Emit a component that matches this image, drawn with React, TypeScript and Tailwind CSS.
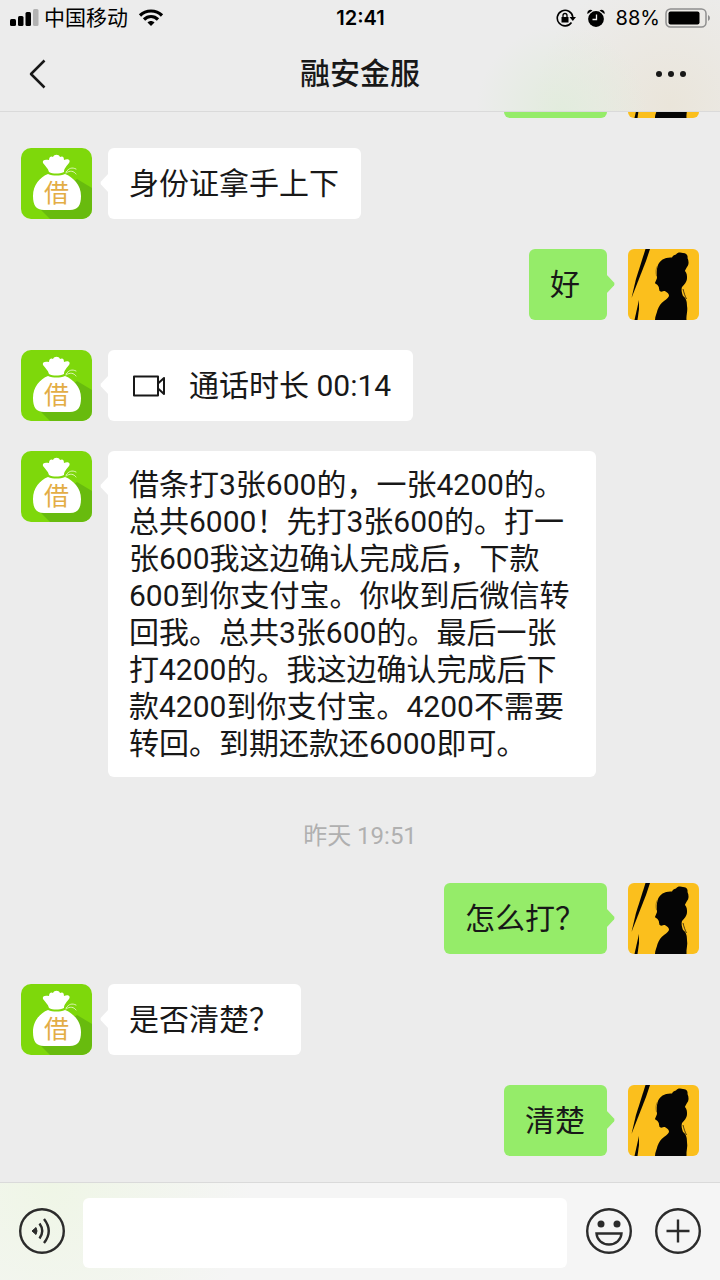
import { useState } from "react";

type Message =
  | { kind: "text"; from: "me" | "them"; text: string }
  | { kind: "call"; from: "me" | "them"; text: string }
  | { kind: "time"; text: string };

const messages: Message[] = [
  { kind: "text", from: "me", text: "" },
  { kind: "text", from: "them", text: "身份证拿手上下" },
  { kind: "text", from: "me", text: "好" },
  { kind: "call", from: "them", text: "通话时长 00:14" },
  {
    kind: "text",
    from: "them",
    text: "借条打3张600的，一张4200的。总共6000！先打3张600的。打一张600我这边确认完成后，下款600到你支付宝。你收到后微信转回我。总共3张600的。最后一张打4200的。我这边确认完成后下款4200到你支付宝。4200不需要转回。到期还款还6000即可。",
  },
  { kind: "time", text: "昨天 19:51" },
  { kind: "text", from: "me", text: "怎么打？" },
  { kind: "text", from: "them", text: "是否清楚？" },
  { kind: "text", from: "me", text: "清楚" },
];

function BagAvatar() {
  return (
    <svg
      viewBox="0 0 71 71"
      className="h-[71px] w-[71px] shrink-0 rounded-[10px]"
      role="img"
      aria-label="融安金服"
    >
      <rect width="71" height="71" fill="#7ed80b" />
      <path d="M56 31 L71 40 V71 H29 L18 60 Z" fill="#68bb0e" />
      <path
        d="M28 24 C27 20 24 18 22 15 C21 12 24 11 28 12 C28 8 31 8 32 9 C33 6 38 6 39 9 C41 8 43 8 43 12 C47 10 50 12 48 15 C46 18 43 20 43 24 C38 26 32 26 28 24 Z"
        fill="#fff"
      />
      <path
        d="M27 26 C32 28 39 28 44 26 C52 29 60 37 60 48 C60 57 57 62 49 62 H23 C15 62 12 57 12 48 C12 37 19 29 27 26 Z"
        fill="#fff"
      />
      <path
        d="M45 24 C48 20 51 19 55 21 M45 25 C49 22 53 23 55 26"
        fill="none"
        stroke="#e6f7c6"
        strokeWidth="0.9"
        strokeLinecap="round"
      />
      <text
        x="35.500"
        y="54"
        textAnchor="middle"
        fontSize="25"
        fill="#e3ad45"
        className="font-['Noto_Sans_CJK_SC',sans-serif]"
      >
        借
      </text>
    </svg>
  );
}

function SilhouetteAvatar() {
  return (
    <svg
      viewBox="0 0 71 71"
      className="h-[71px] w-[71px] shrink-0 rounded-md"
      role="img"
      aria-label="我"
    >
      <rect width="71" height="71" fill="#fbbf1d" />
      <path d="M17.500 0 H22 L18 12 L3.500 49 L8 30 Z" fill="#050505" />
      <path d="M11 51 L11 60 L9.500 71 H6.500 Z" fill="#050505" />
      <path
        d="M30 16 C32 11 37 8 44 8.500 C45 6 47 6 48 5.500 C49 3 53 3 55 4 C59 4 60 7 59.500 9 C61 12 61 16 59 18 C58 20 57 21 57 22 C59 24 59 27 59 29 C59 33 56 36 54 38 C53 41 54 44 55 47 C58 49 59 52 59 57 C60 62 58 66 58.500 71 H27 C27 67 29 64 29.500 61 C31 57 33 54 36 52 C39 50 41 48 41 46.500 C41 44 38 43 37 42 C35 42 34 43 32.500 42.500 C31 42 31.500 41 31 39.500 C31 38 30.500 37.500 29.500 36 C29 35 27 35 27 34 C27.500 32 28.500 31 29 29 C28.500 25 28.500 20 30 16 Z"
        fill="#050505"
      />
      <path d="M55 40 C56 44 57 47 58.500 50" fill="none" stroke="#050505" strokeWidth="0.7" />
      <path d="M28.500 27 C27.500 23 28 19 29.500 17" fill="none" stroke="#6d5312" strokeWidth="0.6" />
    </svg>
  );
}

function Tail({ side }: { side: "left" | "right" }) {
  return (
    <svg
      viewBox="0 0 9 22"
      className={
        side === "left"
          ? "absolute top-[24px] -left-[8px] h-[22px] w-[9px] text-white"
          : "absolute top-[24px] -right-[8px] h-[22px] w-[9px] -scale-x-100 text-[#95ec69]"
      }
      aria-hidden="true"
    >
      <path d="M9 1 L1 9.500 Q0 11 1 12.500 L9 21 Z" fill="currentColor" />
    </svg>
  );
}

function VideoIcon() {
  return (
    <svg
      viewBox="0 0 34 22"
      className="mr-6 ml-[2px] h-[22px] w-[34px] shrink-0"
      fill="none"
      stroke="#181818"
      strokeWidth="2"
      strokeLinejoin="round"
      aria-hidden="true"
    >
      <rect x="3" y="1.500" width="24" height="19" />
      <path d="M27 8.500 L33 3 V19 L27 13.500" />
    </svg>
  );
}

function MessageRow({ message }: { message: Message }) {
  if (message.kind === "time") {
    return (
      <p className="pt-3 text-center text-[24px] leading-[34px] text-[#b0b0b0]">
        {message.text}
      </p>
    );
  }

  const mine = message.from === "me";
  return (
    <div
      className={
        mine
          ? "flex shrink-0 flex-row-reverse items-start gap-[21px]"
          : "flex shrink-0 items-start gap-4"
      }
    >
      {mine ? <SilhouetteAvatar /> : <BagAvatar />}
      <div
        className={`relative flex min-h-[71px] max-w-[488px] items-center rounded-md py-[15px] pr-[22px] pl-[21px] text-[30px] leading-[37px] text-[#181818] ${
          mine ? "bg-[#95ec69]" : "bg-white"
        } ${message.text === "" ? "min-w-[103px]" : "min-w-[78px]"}`}
      >
        <Tail side={mine ? "right" : "left"} />
        {message.kind === "call" && <VideoIcon />}
        <p>{message.text}</p>
      </div>
    </div>
  );
}

function StatusBar() {
  return (
    <div className="grid h-9 grid-cols-[1fr_auto_1fr] items-center pr-[9px] pl-[10px] font-[Inter,'Noto_Sans_CJK_SC',sans-serif] text-[20px] leading-6 text-black">
      <div className="flex items-center">
        <svg viewBox="0 0 29 18" className="h-[18px] w-[29px]" aria-hidden="true">
          <rect x="0" y="10" width="6" height="7" rx="1.500" />
          <rect x="8" y="7" width="5.500" height="10" rx="1.500" />
          <rect x="15.500" y="3" width="5.500" height="14" rx="1.500" />
          <rect x="23" y="0" width="5.500" height="17" rx="1.500" fill="#b2b2b2" />
        </svg>
        <span className="ml-[5px] text-[21px]">中国移动</span>
        <svg
          viewBox="0 0 26 18"
          className="ml-[10px] h-[18px] w-[26px]"
          fill="none"
          stroke="#000"
          strokeWidth="3.200"
          aria-hidden="true"
        >
          <path d="M2 6.500 C8 0.500 18 0.500 24 6.500" />
          <path d="M6 10.500 C10 6.500 16 6.500 20 10.500" />
          <path d="M9.500 13.500 C11.500 11.500 14.500 11.500 16.500 13.500 L13 17 Z" fill="#000" stroke="none" />
        </svg>
      </div>
      <span className="font-semibold">12:41</span>
      <div className="flex items-center justify-end">
        <svg viewBox="0 0 20 18" className="h-[18px] w-5" fill="none" stroke="#000" strokeWidth="1.600" aria-hidden="true">
          <path d="M15.500 13.500 A7.800 7.800 0 1 1 16.800 8" />
          <path d="M13.500 8 H20 L16.800 12 Z" fill="#000" stroke="none" />
          <rect x="5.500" y="8" width="7" height="5.500" fill="#000" stroke="none" />
          <path d="M7 8 V6.500 A2 2 0 0 1 11 6.500 V8" strokeWidth="1.300" />
        </svg>
        <svg viewBox="0 0 18 18" className="ml-[11px] h-[18px] w-[18px]" aria-hidden="true">
          <circle cx="9" cy="10" r="7.900" />
          <path d="M0.500 5 C-0.500 2 3 -0.500 5.500 1.500 Z M17.500 5 C18.500 2 15 -0.500 12.500 1.500 Z" />
          <path d="M9.500 5.500 V10.500 H5.500" fill="none" stroke="#eee" strokeWidth="1.300" />
        </svg>
        <span className="ml-[11px]">88%</span>
        <svg viewBox="0 0 46 20" className="ml-[5px] h-5 w-[46px]" aria-hidden="true">
          <rect x="1" y="1" width="40" height="18" rx="4.500" fill="none" stroke="#8f8f8f" strokeWidth="1.500" />
          <rect x="3.500" y="3.500" width="31" height="13" rx="2" />
          <path d="M43 7 Q45 8 45 10 Q45 12 43 13 Z" fill="#8f8f8f" />
        </svg>
      </div>
    </div>
  );
}

function Header() {
  return (
    <header className="shrink-0 border-b border-[#dadada] bg-[radial-gradient(circle_at_78%_100%,#e2ecdd_0%,transparent_15%),radial-gradient(circle_at_93%_95%,#eae5da_0%,transparent_20%)]">
      <StatusBar />
      <div className="grid h-[75px] grid-cols-[1fr_auto_1fr] items-center px-5">
        <button type="button" aria-label="返回" className="flex h-12 w-12 items-center pl-2">
          <svg
            viewBox="0 0 20 32"
            className="h-8 w-5"
            fill="none"
            stroke="#181818"
            strokeWidth="2.500"
            strokeLinejoin="round"
            aria-hidden="true"
          >
            <path d="M16.500 2.500 L3 16 L16.500 29.500" />
          </svg>
        </button>
        <h1 className="text-[30px] leading-9 font-medium text-[#181818]">融安金服</h1>
        <button
          type="button"
          aria-label="更多"
          className="flex h-12 items-center justify-end gap-[6px] justify-self-end pr-[14px]"
        >
          <span className="h-[6px] w-[6px] rounded-full bg-[#181818]" />
          <span className="h-[6px] w-[6px] rounded-full bg-[#181818]" />
          <span className="h-[6px] w-[6px] rounded-full bg-[#181818]" />
        </button>
      </div>
    </header>
  );
}

function Composer() {
  const [draft, setDraft] = useState("");

  return (
    <footer className="flex shrink-0 items-start border-t border-[#dadada] bg-[#f5f5f5] bg-[radial-gradient(circle_at_7%_0%,#eff6e6_0%,transparent_30%)] px-[19px] pt-[15px] pb-3">
      <button type="button" aria-label="语音" className="mt-[10px] shrink-0">
        <svg
          viewBox="0 0 46 46"
          className="h-[46px] w-[46px]"
          fill="none"
          stroke="#2b2b2b"
          strokeWidth="2.400"
          aria-hidden="true"
        >
          <circle cx="23" cy="23" r="21.800" />
          <path d="M13 23 L17 19.500 Q19 23 17 26.500 Z" fill="#2b2b2b" stroke="#2b2b2b" strokeWidth="1" strokeLinejoin="round" />
          <path d="M20.500 15.500 Q26 23 20.500 30.500" />
          <path d="M25 11 Q34.500 23 25 35" />
        </svg>
      </button>
      <input
        type="text"
        aria-label="消息"
        value={draft}
        onChange={(e) => setDraft(e.target.value)}
        className="ml-[18px] h-[70px] min-w-0 flex-1 rounded-md bg-white px-4 text-[30px] text-[#181818] outline-none"
      />
      <button type="button" aria-label="表情" className="mt-[10px] ml-[19px] shrink-0">
        <svg
          viewBox="0 0 46 46"
          className="h-[46px] w-[46px]"
          fill="none"
          stroke="#2b2b2b"
          strokeWidth="2.400"
          aria-hidden="true"
        >
          <circle cx="23" cy="23" r="21.800" />
          <circle cx="15" cy="16" r="3.500" fill="#2b2b2b" stroke="none" />
          <circle cx="31" cy="16" r="3.500" fill="#2b2b2b" stroke="none" />
          <path d="M10.500 25.500 H35.500 C35 32 30 36.500 23 36.500 C16 36.500 11 32 10.500 25.500 Z" />
        </svg>
      </button>
      <button type="button" aria-label="更多功能" className="mt-[10px] ml-[23px] shrink-0">
        <svg
          viewBox="0 0 46 46"
          className="h-[46px] w-[46px]"
          fill="none"
          stroke="#2b2b2b"
          strokeWidth="2.400"
          aria-hidden="true"
        >
          <circle cx="23" cy="23" r="21.800" />
          <path d="M23 11.500 V34.500 M11.500 23 H34.500" />
        </svg>
      </button>
    </footer>
  );
}

export default function App() {
  return (
    <div className="flex h-screen flex-col bg-[#ececec] font-[Roboto,'Noto_Sans_CJK_SC',sans-serif]">
      <Header />
      <main className="flex min-h-0 flex-1 flex-col justify-end gap-[30px] overflow-hidden px-[21px] pb-[26px]">
        {messages.map((message, i) => (
          <MessageRow key={i} message={message} />
        ))}
      </main>
      <Composer />
    </div>
  );
}
